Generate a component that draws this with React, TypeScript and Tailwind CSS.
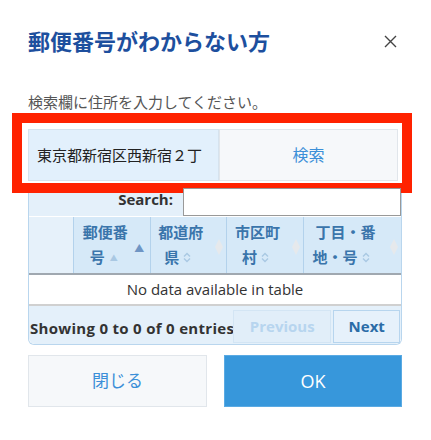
import React from "react";

const jp = { fontFamily: '"Open Sans", "Noto Sans CJK JP", sans-serif' };

function SortBoth() {
  return (
    <svg width="8" height="11" viewBox="0 0 8 11" className="inline-block ml-[4px]">
      <path d="M1 4.5 L4 1.5 L7 4.5" fill="none" stroke="#a9c8e3" strokeWidth="1.4" />
      <path d="M1 6.5 L4 9.5 L7 6.5" fill="none" stroke="#a9c8e3" strokeWidth="1.4" />
    </svg>
  );
}

function Diamond() {
  return (
    <svg width="8" height="16" viewBox="0 0 8 16" className="absolute right-[3px] top-[22px]">
      <path d="M4 0 L8 8 L4 16 L0 8 Z" fill="#e6e9ec" />
    </svg>
  );
}

function HeadCell({ w, l1, l2, icon, right, pl }: { w: number; l1: string; l2: React.ReactNode; icon: React.ReactNode; right: React.ReactNode; pl: number }) {
  return (
    <div className="relative h-full border-l border-[#b3d2ec] leading-[25px] pt-[3px]" style={{ width: w, paddingLeft: pl }}>
      <div>{l1}</div>
      <div className="flex items-center">{l2}{icon}</div>
      {right}
    </div>
  );
}

export default function App() {
  return (
    <div className="w-[431px] h-[440px] bg-white relative" style={jp}>
      <div className="flex items-center justify-between pl-[28px] pr-[34px] pt-[29px] h-[53px]">
        <div className="text-[22px] font-bold text-[#1d4f9e] leading-[24px]">郵便番号がわからない方</div>
        <svg width="13" height="13" viewBox="0 0 13 13">
          <path d="M1 1 L12 12 M12 1 L1 12" stroke="#444" strokeWidth="1.4" />
        </svg>
      </div>
      <div className="pl-[28px] mt-[39px] text-[15px] text-[#555] leading-[20px]">検索欄に住所を入力してください。</div>
      <div className="ml-[12px] mt-[1px] w-[400px] h-[80px] border-[10px] border-[#ff2200] bg-white pl-[6px] pt-[6px] pr-[4px] flex">
        <div className="w-[191px] h-[52px] bg-[#e2f0fc] border border-[#d6e3ee] flex items-center pl-[8px] text-[15px] text-[#222]">東京都新宿区西新宿２丁</div>
        <div className="w-[179px] h-[52px] bg-[#f6f8fa] border border-[#e1e6eb] flex items-center justify-center text-[16px] text-[#3b8fd8]">検索</div>
      </div>
      <div className="ml-[28px] w-[374px] border-x border-b border-[#b9d6ee] rounded-b-[6px]">
        <div className="flex h-[23px] bg-[#e4f0fa]">
          <div className="w-[144px] text-right font-bold text-[15px] text-[#333] leading-[15px] -mt-[1px]">Search:</div>
          <div className="ml-[10px] flex-1 -mt-[5px] h-[28px] bg-white border border-[#999]"></div>
        </div>
        <div className="flex h-[58px] mt-[1px] bg-[#d6e9f8] border-b-2 border-[#a0a8b0] text-[15px] font-bold text-[#3a75ab]">
          <div className="w-[44px] h-full bg-[#e6f1fa]"></div>
          <HeadCell w={78} pl={9} l1="郵便番" l2={<span className="pl-[7px]">号</span>} icon={<span className="ml-[5px] text-[8px] text-[#a9c8e3]">▲</span>} right={<span className="absolute right-[6px] top-[19px] text-[10px] text-[#6f95c4]">▲</span>} />
          <HeadCell w={76} pl={7} l1="都道府" l2={<span className="pl-[6px]">県</span>} icon={<SortBoth />} right={<Diamond />} />
          <HeadCell w={77} pl={8} l1="市区町" l2={<span className="pl-[7px]">村</span>} icon={<SortBoth />} right={<Diamond />} />
          <HeadCell w={99} pl={12} l1="丁目・番" l2={<span className="-ml-[3px]">地・号</span>} icon={<SortBoth />} right={<Diamond />} />
        </div>
        <div className="h-[31px] bg-white border-b-2 border-[#d0d0d0] flex items-center justify-center text-[15px] text-[#333]">No data available in table</div>
        <div className="h-[38px] bg-[#e4f0fa] rounded-b-[6px] flex items-center pl-[1px] pr-[1px]">
          <div className="w-[203px] font-bold text-[15px] tracking-[0.3px] text-[#333] pt-[6px] whitespace-nowrap">Showing 0 to 0 of 0 entries</div>
          <div className="w-[99px] h-[33px] mt-[2px] bg-[#e1eef9] border border-[#d3e5f4] flex items-center justify-center font-bold text-[15px] text-[#b7d5ef]">Previous</div>
          <div className="ml-[2px] w-[67px] h-[33px] mt-[2px] bg-[#e6f1fb] border border-[#b7d5ee] flex items-center justify-center font-bold text-[15px] text-[#2b6ca7]">Next</div>
        </div>
      </div>
      <div className="flex ml-[28px] mt-[10px] w-[374px] justify-between">
        <div className="w-[179px] h-[52px] bg-[#f6f8fa] border border-[#e1e6eb] flex items-center justify-center text-[17px] text-[#3b8fd8]">閉じる</div>
        <div className="w-[178px] h-[52px] bg-[#3797db] border border-[#5aaae3] flex items-center justify-center text-[18px] text-white">OK</div>
      </div>
    </div>
  );
}
